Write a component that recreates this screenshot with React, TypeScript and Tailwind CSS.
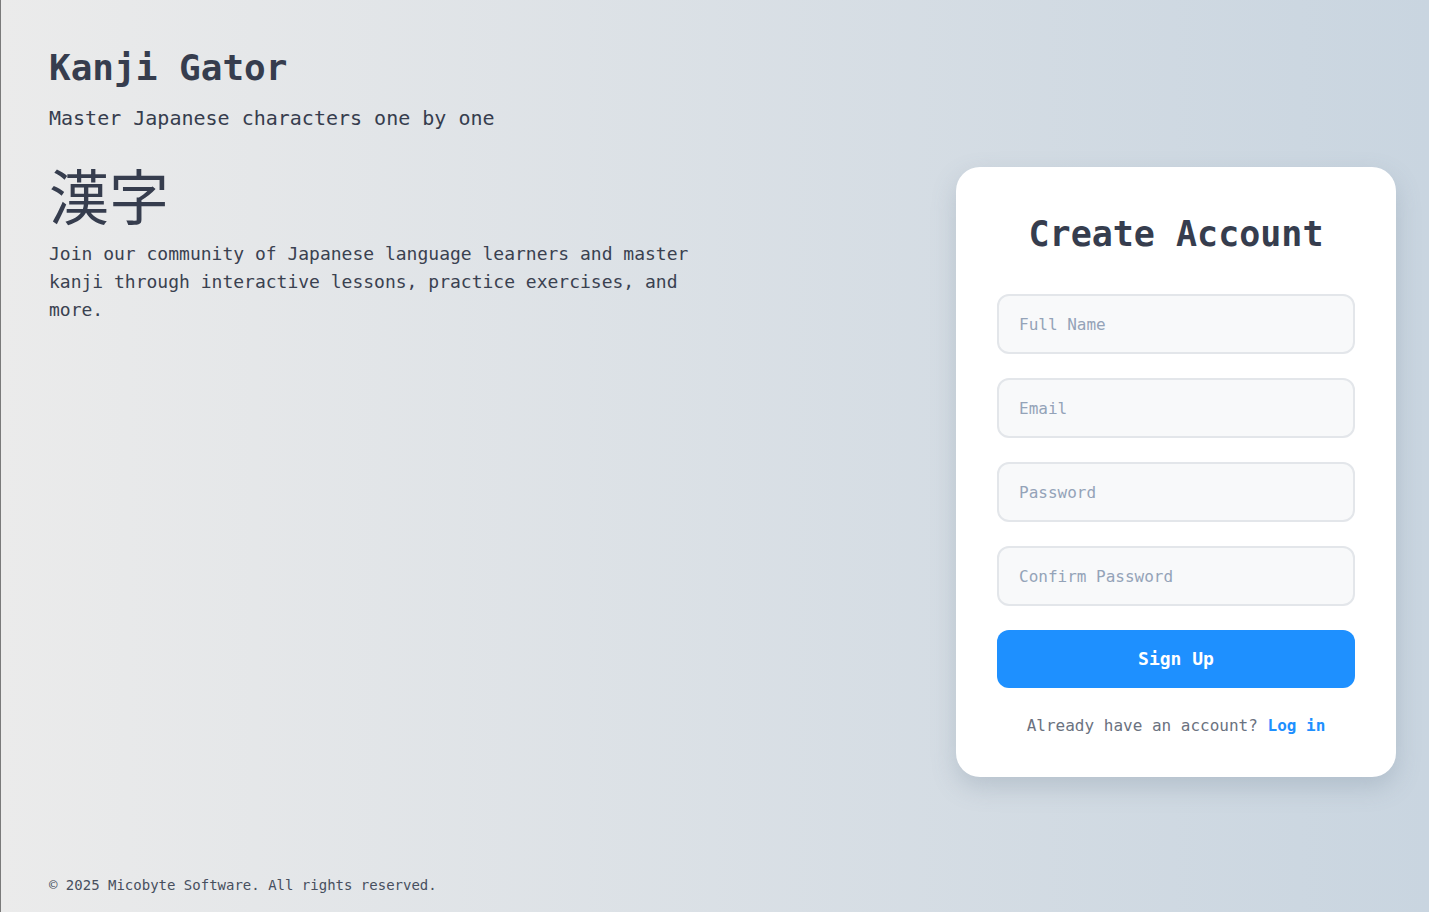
import { useState } from "react";

const mono = "font-['DejaVu_Sans_Mono','Liberation_Mono',monospace]";

function Field({ placeholder, type = "text" }: { placeholder: string; type?: string }) {
  const [value, setValue] = useState("");
  return (
    <input
      type={type}
      value={value}
      onChange={(e) => setValue(e.target.value)}
      placeholder={placeholder}
      className={`${mono} w-full h-[60px] px-5 rounded-xl border-2 border-[#e3e6ea] bg-[#f8f9fa] text-base text-[#374151] placeholder:text-[#94a3b8] outline-none`}
    />
  );
}

export default function App() {
  return (
    <div
      className={`${mono} min-h-screen h-[912px] flex flex-col border-l border-[#7a7a7a] bg-gradient-to-r from-[#ebebeb] to-[#c9d5e0] text-[#363d4e]`}
    >
      <main className="flex-1 flex justify-between">
        {/* Intro */}
        <section className="pl-12 pt-[46px] w-[700px]">
          <h1 className="text-4xl font-bold leading-[44px]">Kanji Gator</h1>
          <p className="text-xl mt-[14px] leading-7">Master Japanese characters one by one</p>
          <div className="text-6xl font-['Noto_Sans_CJK_JP',sans-serif] mt-[26px] leading-[72px]">
            漢字
          </div>
          <p className="text-lg leading-7 mt-[10px] max-w-[650px] text-[#3a4150]">
            Join our community of Japanese language learners and master kanji through
            interactive lessons, practice exercises, and more.
          </p>
        </section>

        {/* Sign up card */}
        <section className="pr-[33px] pt-[167px]">
          <div className="w-[440px] h-[610px] bg-white rounded-3xl px-[41px] py-10 shadow-[0_10px_25px_rgba(100,120,140,0.25)]">
            <h2 className="text-[35px] font-bold text-center leading-[54px]">
              Create Account
            </h2>
            <form className="mt-[33px] flex flex-col gap-6" onSubmit={(e) => e.preventDefault()}>
              <Field placeholder="Full Name" />
              <Field placeholder="Email" type="email" />
              <Field placeholder="Password" type="password" />
              <Field placeholder="Confirm Password" type="password" />
              <button
                type="submit"
                className={`${mono} h-[58px] rounded-xl bg-[#1e90ff] text-white text-lg font-bold`}
              >
                Sign Up
              </button>
            </form>
            <p className="text-center mt-[26px] text-base text-[#6b7280]">
              Already have an account?{" "}
              <a href="#" className="text-[#1e90ff] font-bold">
                Log in
              </a>
            </p>
          </div>
        </section>
      </main>

      <footer className="pl-12 pb-[17px] text-sm text-[#474f5e]">
        © 2025 Micobyte Software. All rights reserved.
      </footer>
    </div>
  );
}
